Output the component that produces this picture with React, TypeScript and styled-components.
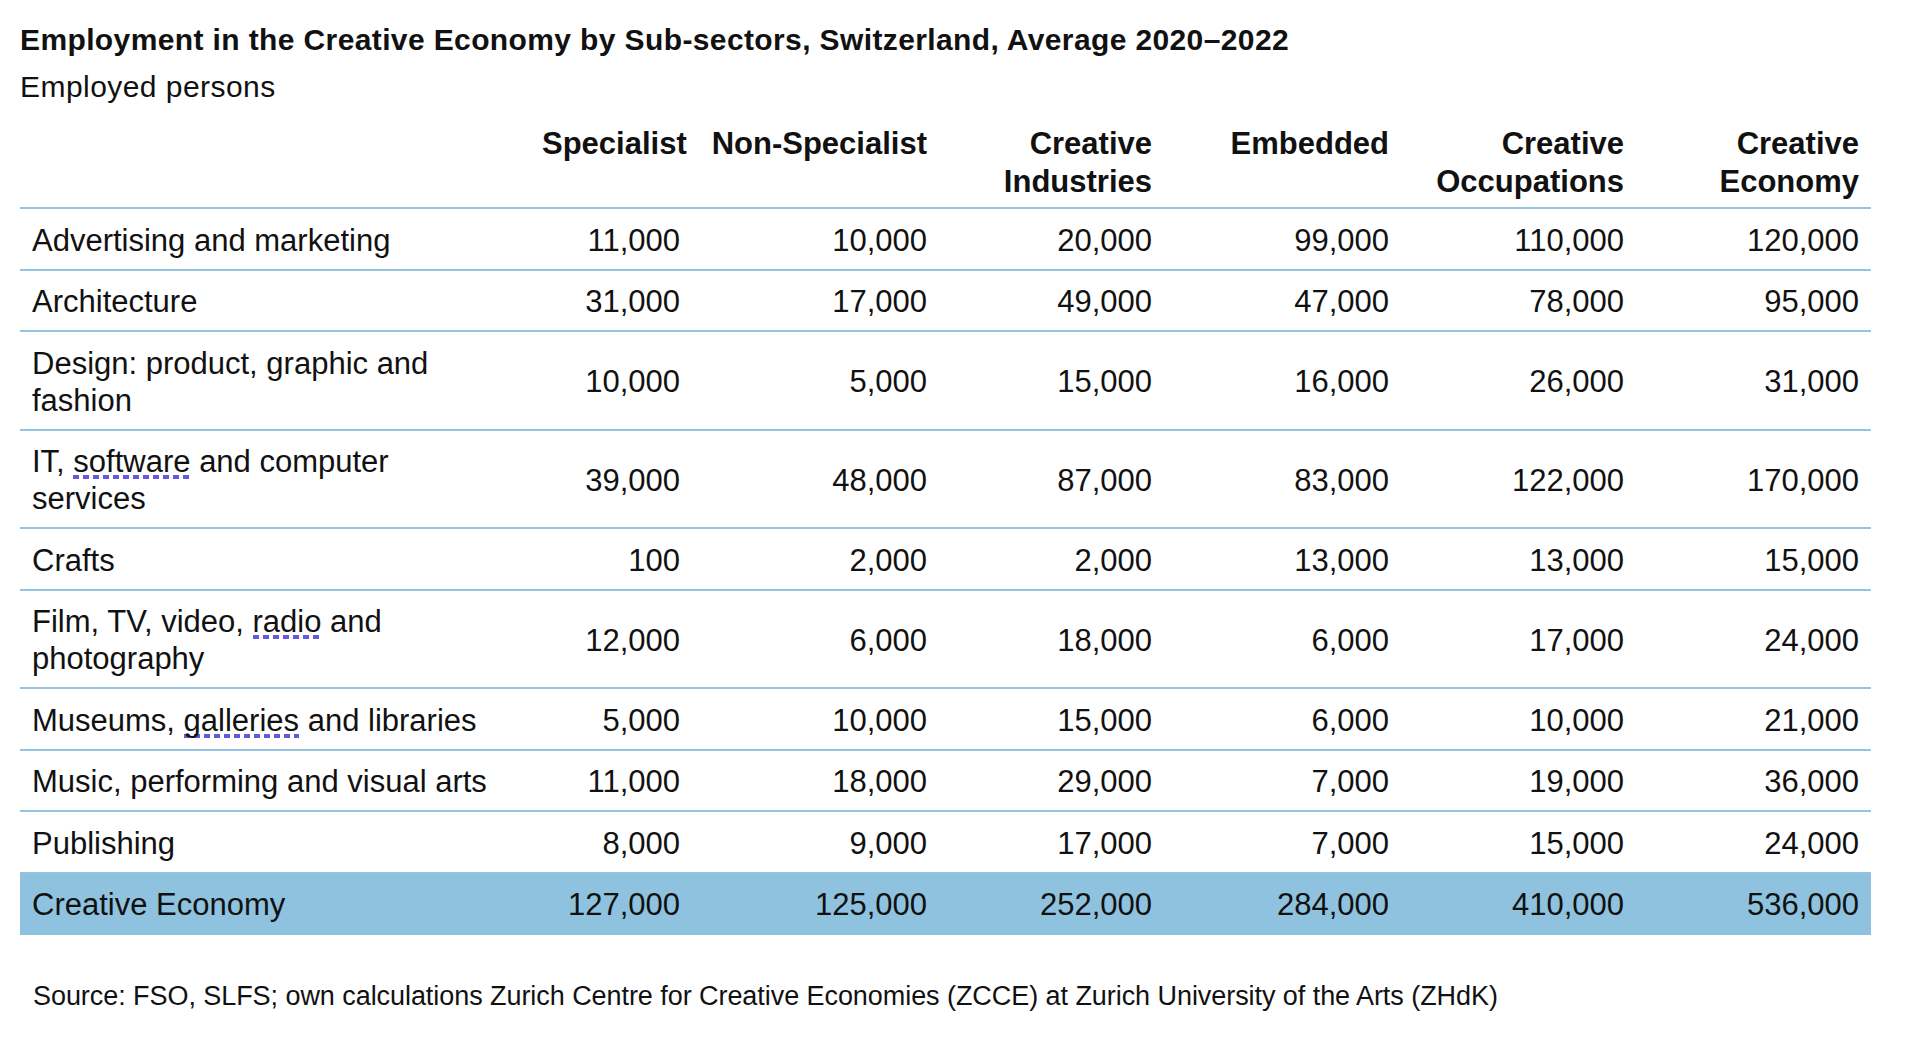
import React from "react";
import styled, { createGlobalStyle } from "styled-components";

const GlobalStyle = createGlobalStyle`
  html, body {
    margin: 0;
    padding: 0;
    background: #ffffff;
  }
  body {
    font-family: "Liberation Sans", Arial, Helvetica, sans-serif;
    color: #111111;
  }
`;

const COLS = "510px 162px 247px 225px 237px 235px 235px";

const Page = styled.div`
  padding: 21px 0 0 20px;
  width: 1851px;
`;

const Title = styled.h1`
  margin: 0;
  font-size: 30px;
  line-height: 37px;
  font-weight: 700;
  letter-spacing: 0.38px;
`;

const Subtitle = styled.div`
  margin-top: 10px;
  font-size: 30px;
  line-height: 37px;
  font-weight: 400;
  letter-spacing: 0.45px;
`;

const Table = styled.div`
  margin-top: 20px;
  display: flex;
  flex-direction: column;
`;

const HeaderRow = styled.div`
  display: grid;
  grid-template-columns: ${COLS};
  align-items: start;
  padding-bottom: 6px;
  border-bottom: 2px solid #93c5e0;
`;

const HeadCell = styled.div`
  font-size: 31px;
  line-height: 38px;
  font-weight: 700;
  text-align: right;
  padding: 0 12px;
  white-space: nowrap;
  letter-spacing: 0;
`;

const Row = styled.div<{ $total?: boolean }>`
  display: grid;
  grid-template-columns: ${COLS};
  align-items: center;
  padding: 12.5px 0 10px;
  border-bottom: 2px solid ${(p) => (p.$total ? "#8fc2de" : "#93c5e0")};
  background: ${(p) => (p.$total ? "#8fc2de" : "transparent")};
`;

const LabelCell = styled.div`
  font-size: 31px;
  line-height: 37px;
  padding: 0 12px;
  white-space: nowrap;
`;

const NumCell = styled.div`
  font-size: 31px;
  line-height: 37px;
  text-align: right;
  padding: 0 12px;
  white-space: nowrap;
`;

const LabelLine = styled.div``;

const Spell = styled.span`
  background-image: linear-gradient(to right, #6657e0 62%, transparent 62%);
  background-size: 10px 4px;
  background-repeat: repeat-x;
  background-position: 0 31px;
`;

const Source = styled.div`
  margin-top: 43px;
  padding-left: 13px;
  font-size: 27px;
  line-height: 37px;
  letter-spacing: -0.06px;
`;

type RowData = {
  label: React.ReactNode[];
  values: string[];
};

const rows: RowData[] = [
  { label: ["Advertising and marketing"], values: ["11,000", "10,000", "20,000", "99,000", "110,000", "120,000"] },
  { label: ["Architecture"], values: ["31,000", "17,000", "49,000", "47,000", "78,000", "95,000"] },
  { label: ["Design: product, graphic and", "fashion"], values: ["10,000", "5,000", "15,000", "16,000", "26,000", "31,000"] },
  {
    label: [
      <>
        IT, <Spell>software</Spell> and computer
      </>,
      "services",
    ],
    values: ["39,000", "48,000", "87,000", "83,000", "122,000", "170,000"],
  },
  { label: ["Crafts"], values: ["100", "2,000", "2,000", "13,000", "13,000", "15,000"] },
  {
    label: [
      <>
        Film, TV, video, <Spell>radio</Spell> and
      </>,
      "photography",
    ],
    values: ["12,000", "6,000", "18,000", "6,000", "17,000", "24,000"],
  },
  {
    label: [
      <>
        Museums, <Spell>galleries</Spell> and libraries
      </>,
    ],
    values: ["5,000", "10,000", "15,000", "6,000", "10,000", "21,000"],
  },
  { label: ["Music, performing and visual arts"], values: ["11,000", "18,000", "29,000", "7,000", "19,000", "36,000"] },
  { label: ["Publishing"], values: ["8,000", "9,000", "17,000", "7,000", "15,000", "24,000"] },
];

const total: RowData = {
  label: ["Creative Economy"],
  values: ["127,000", "125,000", "252,000", "284,000", "410,000", "536,000"],
};

const headers: string[][] = [
  ["Specialist"],
  ["Non-Specialist"],
  ["Creative", "Industries"],
  ["Embedded"],
  ["Creative", "Occupations"],
  ["Creative", "Economy"],
];

const DataRow: React.FC<{ data: RowData; total?: boolean }> = ({ data, total }) => (
  <Row $total={total}>
    <LabelCell>
      {data.label.map((l, i) => (
        <LabelLine key={i}>{l}</LabelLine>
      ))}
    </LabelCell>
    {data.values.map((v, i) => (
      <NumCell key={i}>{v}</NumCell>
    ))}
  </Row>
);

export default function App() {
  return (
    <>
      <GlobalStyle />
      <Page>
        <Title>Employment in the Creative Economy by Sub-sectors, Switzerland, Average 2020–2022</Title>
        <Subtitle>Employed persons</Subtitle>
        <Table>
          <HeaderRow>
            <HeadCell />
            {headers.map((h, i) => (
              <HeadCell key={i}>
                {h.map((line, j) => (
                  <div key={j}>{line}</div>
                ))}
              </HeadCell>
            ))}
          </HeaderRow>
          {rows.map((r, i) => (
            <DataRow key={i} data={r} />
          ))}
          <DataRow data={total} total />
        </Table>
        <Source>
          Source: FSO, SLFS; own calculations Zurich Centre for Creative Economies (ZCCE) at Zurich University of the Arts (ZHdK)
        </Source>
      </Page>
    </>
  );
}
